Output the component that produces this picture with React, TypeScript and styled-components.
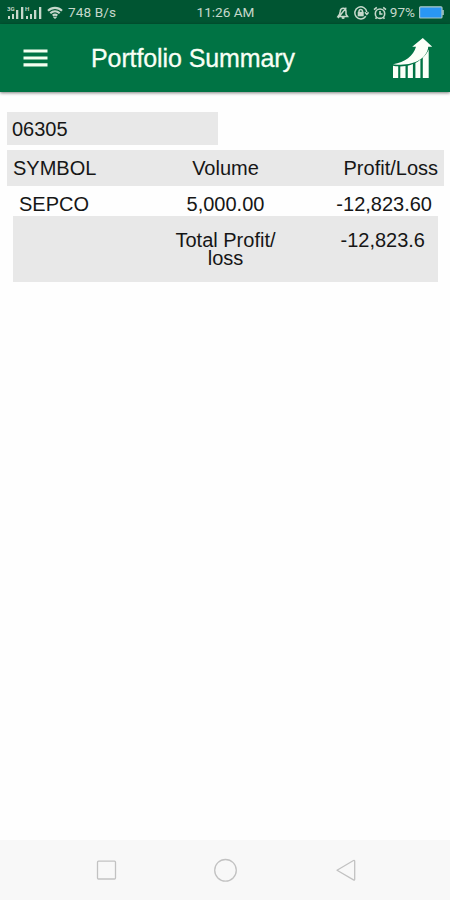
import React from "react";
import styled, { createGlobalStyle } from "styled-components";

const GlobalStyle = createGlobalStyle`
  * { box-sizing: border-box; }
  body { margin: 0; background: #fefefe; }
`;

const Screen = styled.div`
  width: 450px;
  height: 900px;
  display: flex;
  flex-direction: column;
  background: #fefefe;
  color: #161616;
  font-family: "Liberation Sans", Arial, sans-serif;
  overflow: hidden;
`;

const StatusBar = styled.header`
  height: 24px;
  flex: none;
  display: grid;
  grid-template-columns: 1fr auto 1fr;
  align-items: center;
  padding: 1px 6px 0 7px;
  background: #005532;
  color: #c6d8cb;
  font: 13.6px/20px Roboto, sans-serif;
`;

const StatusGroup = styled.div<{ $end?: boolean }>`
  display: flex;
  align-items: center;
  justify-content: ${(p) => (p.$end ? "flex-end" : "flex-start")};
  white-space: nowrap;
  svg { display: block; flex: none; }
`;

const SignalGroup = styled.div`
  display: flex;
  margin-right: 4px;
`;

const Alerts = styled.div`
  display: flex;
  gap: 4px;
`;

const StatusText = styled.span`
  padding-bottom: 2px;
`;

const Speed = styled(StatusText)`
  margin-left: 5px;
  letter-spacing: 0.1px;
`;

const Percent = styled(StatusText)`
  margin: 0 4px 0 3px;
`;

const AppBar = styled.div`
  height: 68px;
  flex: none;
  display: flex;
  align-items: center;
  padding: 0 18px 0 23px;
  background: #007344;
  box-shadow: 0 1px 3px rgba(0, 0, 0, 0.5);
`;

const MenuButton = styled.button`
  width: 68px;
  padding: 0;
  border: 0;
  background: none;
  svg { display: block; }
`;

const Title = styled.h1`
  flex: 1;
  margin: 0;
  color: #f8fff5;
  font-size: 25px;
  line-height: 30px;
  font-weight: 400;
  letter-spacing: -0.1px;
  -webkit-text-stroke: 0.3px #f8fff5;
`;

const Content = styled.main`
  flex: 1;
  padding: 20px 6px 0 7px;
  font-size: 20px;
  line-height: 18px;
`;

const Account = styled.div`
  width: 211px;
  height: 33px;
  margin-bottom: 5px;
  padding-left: 5px;
  background: #e8e8e8;
  line-height: 34px;
`;

const Row = styled.div`
  display: grid;
  grid-template-columns: 1fr 1fr 1fr;
`;

const HeaderRow = styled(Row)`
  height: 36px;
  padding: 0 6px;
  background: #e8e8e8;
  line-height: 36px;
`;

const DataRow = styled(Row)`
  height: 30px;
  padding: 2px 12px 0;
  line-height: 32px;
`;

const TotalRow = styled(Row)`
  height: 66px;
  margin: 0 6px;
  padding: 15px 13px 0;
  background: #e8e8e8;
`;

const Cell = styled.div<{ $align?: "left" | "center" | "right" }>`
  text-align: ${(p) => p.$align ?? "left"};
  white-space: nowrap;
`;

const TotalLabel = styled(Cell)`
  white-space: normal;
`;

const NavBar = styled.nav`
  height: 60px;
  flex: none;
  display: flex;
  justify-content: center;
  align-items: center;
  gap: 96px;
  padding-left: 2px;
  background: #f8f8f8;
  svg { display: block; }
`;

const Signal = ({ label }: { label: string }) => (
  <svg width="18" height="14" viewBox="0 0 18 14" fill="#c6d8cb">
    <text x="0" y="5" fontSize="6" fontFamily="Roboto, sans-serif" fontWeight="700">{label}</text>
    <rect x="1" y="10" width="2" height="3" />
    <rect x="5" y="8" width="2" height="5" />
    <rect x="9" y="4" width="2.3" height="9" />
    <rect x="14" y="1" width="2.3" height="12" />
  </svg>
);

const Wifi = () => (
  <svg width="16" height="14" viewBox="0 0 16 14" fill="none" stroke="#c6d8cb" strokeWidth="2.1">
    <path d="M1 4.8C5 .9 11 .9 15 4.8M3.3 7.3c2.8-2.7 6.6-2.7 9.4 0M5.7 9.6c1.5-1.3 3.1-1.3 4.6 0" />
    <path d="M6.5 11h3L8 12.7z" fill="#c6d8cb" strokeWidth=".7" />
  </svg>
);

const MutedBell = () => (
  <svg width="13" height="14" viewBox="0 0 13 14" fill="none" stroke="#c6d8cb" strokeWidth="1.5">
    <path d="M2 10.5h9.6L10 8.2V5.5C10 3.7 9 2.3 7.3 2.3S4.4 3.5 4.2 5.4L3.6 8.2zM6 11.4c.4 1 1.8 1 2.2 0M10.3 1.6L2 12" />
  </svg>
);

const RotationLock = () => (
  <svg width="16" height="14" viewBox="0 0 16 14" fill="none" stroke="#c6d8cb" strokeWidth="1.5">
    <path d="M12.8 10.3A6 6 0 1 1 13.8 6M11.9 6.3l1.9 2 1.8-2" />
    <rect x="4.7" y="5.8" width="6" height="4.5" fill="#c6d8cb" stroke="none" />
    <path d="M6 6V5a1.8 1.8 0 0 1 3.5 0v1" />
  </svg>
);

const Alarm = () => (
  <svg width="14" height="14" viewBox="0 0 14 14" fill="none" stroke="#c6d8cb" strokeWidth="1.6">
    <circle cx="7" cy="7.7" r="4.7" />
    <path d="M7 5v3h2.5M1 3.7L3.8 1.4M10.2 1.4L13 3.7M3.7 11.4l-1.2 1.3M10.3 11.4l1.2 1.3" />
  </svg>
);

const Battery = () => (
  <svg width="25" height="13" viewBox="0 0 25 13">
    <rect x=".6" y=".8" width="22.4" height="11.2" rx="1" fill="#2997f5" stroke="#a9c7c6" strokeWidth="1.2" />
    <path d="M24 4v5" stroke="#a9c7c6" strokeWidth="1.6" />
  </svg>
);

const MenuIcon = () => (
  <svg width="25" height="18" viewBox="0 0 25 18" fill="#f4fff0">
    <path d="M.5 0.5h24v3.1H.5zM.5 7.5h24v3.1H.5zM.5 14.3h24v3.1H.5z" />
  </svg>
);

const GrowthIcon = () => (
  <svg width="40" height="42" viewBox="0 0 40 42" fill="#fbfff8">
    <path d="M1 27.2C13 25.5 21.5 19 24 9.8h-3.8L30.8 1l9.4 8.8h-4C35.4 21.5 21 30 1 27.2z" />
    <path d="M1 28.8c1.7.4 3.4.5 5.2.5V41H1zM8.3 29.5c1.8 0 3.5-.2 5.2-.4V41H8.3zM15.8 28.8c1.8-.4 3.5-1 5.1-1.8V41h-5.1zM23.4 26c1.8-.9 3.5-2.1 5-3.6V41h-5zM30.8 20.7c2.7-2.5 4.6-5.1 5.9-8.2V41h-5.9z" />
  </svg>
);

export default function App() {
  return (
    <Screen>
      <GlobalStyle />
      <StatusBar>
        <StatusGroup>
          <SignalGroup>
            <Signal label="3G" />
            <Signal label="H" />
          </SignalGroup>
          <Wifi />
          <Speed>748 B/s</Speed>
        </StatusGroup>
        <StatusText>11:26 AM</StatusText>
        <StatusGroup $end>
          <Alerts>
            <MutedBell />
            <RotationLock />
            <Alarm />
          </Alerts>
          <Percent>97%</Percent>
          <Battery />
        </StatusGroup>
      </StatusBar>
      <AppBar>
        <MenuButton aria-label="Menu"><MenuIcon /></MenuButton>
        <Title>Portfolio Summary</Title>
        <GrowthIcon />
      </AppBar>
      <Content>
        <Account>06305</Account>
        <HeaderRow>
          <Cell>SYMBOL</Cell>
          <Cell $align="center">Volume</Cell>
          <Cell $align="right">Profit/Loss</Cell>
        </HeaderRow>
        <DataRow>
          <Cell>SEPCO</Cell>
          <Cell $align="center">5,000.00</Cell>
          <Cell $align="right">-12,823.60</Cell>
        </DataRow>
        <TotalRow>
          <Cell />
          <TotalLabel $align="center">Total Profit/<wbr />loss</TotalLabel>
          <Cell $align="right">-12,823.6</Cell>
        </TotalRow>
      </Content>
      <NavBar>
        <svg width="24" height="24" viewBox="0 0 24 24" fill="none" stroke="#c2c2c2" strokeWidth="1.3">
          <rect x="3.5" y="3.2" width="18" height="17.8" rx="1" />
        </svg>
        <svg width="24" height="24" viewBox="0 0 24 24" fill="none" stroke="#c2c2c2" strokeWidth="1.3">
          <circle cx="11.5" cy="12.3" r="10.8" />
        </svg>
        <svg width="24" height="24" viewBox="0 0 24 24" fill="none" stroke="#c2c2c2" strokeWidth="1.3" strokeLinejoin="round">
          <path d="M3 12.2L19.5 2.5q1.2-.5 1.2.8v18q0 1.3-1.2.6z" />
        </svg>
      </NavBar>
    </Screen>
  );
}
